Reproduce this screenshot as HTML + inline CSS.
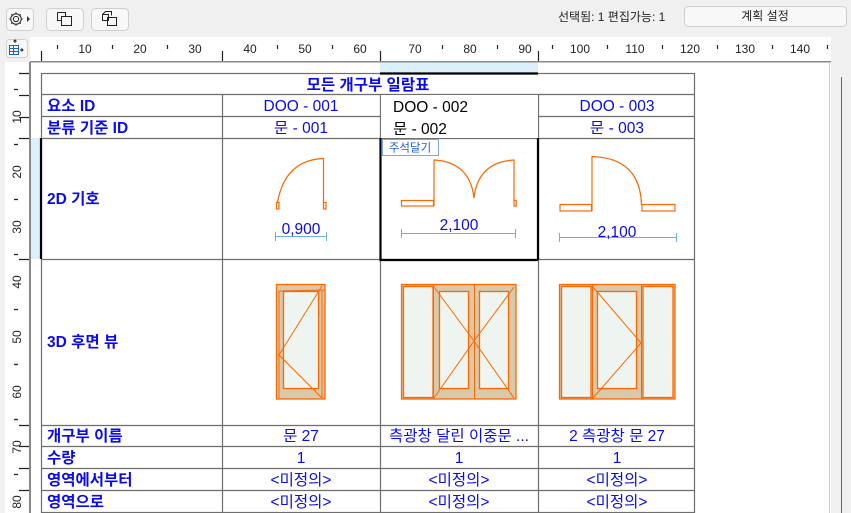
<!DOCTYPE html>
<html><head><meta charset="utf-8"><style>
html,body{margin:0;padding:0;width:851px;height:513px;overflow:hidden;background:#f0f0f0}
svg{display:block;font-family:"Liberation Sans","Noto Sans CJK KR",sans-serif}
</style></head><body>
<svg width="851" height="513" viewBox="0 0 851 513" xmlns="http://www.w3.org/2000/svg">
<!-- toolbar -->
<rect x="6.5" y="8.5" width="27" height="22" rx="4" fill="#f8f8f8" stroke="#cfcfcf"/>
<g fill="none" stroke="#333" stroke-width="1.1"><circle cx="16" cy="19" r="2.6"/><circle cx="16" cy="19" r="5.2"/>
<path d="M16 12.3v1.5M16 24.2v1.5M9.3 19h1.5M21.2 19h1.5M11.3 14.3l1 1M19.7 22.7l1 1M11.3 23.7l1-1M19.7 15.3l1-1"/></g>
<path d="M27 16 L30 19 L27 22Z" fill="#333"/>
<rect x="46.5" y="8.5" width="37" height="22" rx="4" fill="#f8f8f8" stroke="#cfcfcf"/>
<g fill="none" stroke="#222"><path d="M57.5 12.5h8v4M57.5 12.5v8h4"/><rect x="61.5" y="16.5" width="10" height="9"/></g>
<rect x="91.5" y="8.5" width="37" height="22" rx="4" fill="#f8f8f8" stroke="#cfcfcf"/>
<g fill="none" stroke="#222"><path d="M102.5 14.5l3-3h6v4M102.5 14.5h6v6h-6z"/><rect x="107.5" y="17.5" width="9" height="8"/></g>
<text x="558" y="21" font-size="12" fill="#222">선택됨: 1  편집가능: 1</text>
<rect x="684.5" y="6.5" width="162" height="20" rx="4" fill="#f8f8f8" stroke="#cfcfcf"/>
<text x="765" y="20" font-size="12" fill="#222" text-anchor="middle">계획 설정</text>
<!-- corner icon -->
<rect x="6.5" y="39.5" width="21" height="18" rx="3" fill="#f8f8f8" stroke="#cfcfcf"/>
<g stroke="#1f5fd0" fill="none"><rect x="9.5" y="45.5" width="9" height="9"/><path d="M9.5 48.5h9M9.5 51.5h9M13.5 45.5v9"/></g>
<path d="M15 43v-3M13.5 41.5L15 40l1.5 1.5M20 50h3M21.5 48.5L23 50l-1.5 1.5" stroke="#222" fill="none"/>
<!-- top ruler -->
<rect x="30" y="37" width="801" height="25" fill="#fff"/>
<line x1="30" y1="61.5" x2="831" y2="61.5" stroke="#888"/>
<g stroke="#222" stroke-width="1.2">
<path d="M41.5 51v10M222.5 51v10M380.5 51v10M538.5 51v10"/>
<path d="M57.5 45v4M112.5 45v4M167.5 45v4M277.5 45v4M332.5 45v4M442.5 45v4M497.5 45v4M552.5 45v4M607.5 45v4M662.5 45v4M717.5 45v4M772.5 45v4M827.5 45v4"/>
</g>
<g font-size="12" fill="#222" text-anchor="middle">
<text x="85" y="53">10</text><text x="140" y="53">20</text><text x="195" y="53">30</text><text x="250" y="53">40</text><text x="305" y="53">50</text><text x="360" y="53">60</text><text x="415" y="53">70</text><text x="470" y="53">80</text><text x="525" y="53">90</text><text x="580" y="53">100</text><text x="635" y="53">110</text><text x="690" y="53">120</text><text x="745" y="53">130</text><text x="800" y="53">140</text>
</g>
<!-- left ruler -->
<rect x="5" y="62" width="25" height="451" fill="#fff"/>
<rect x="30" y="138" width="11" height="121" fill="#dcf0fb"/>
<line x1="29.5" y1="62" x2="29.5" y2="513" stroke="#888"/>
<g stroke="#222" stroke-width="1.2">
<path d="M19 73.5h10M19 95.5h10M19 117.5h10M19 138.5h10M19 259.5h10M19 425.5h10M19 446.5h10M19 468.5h10M19 490.5h10"/>
<path d="M14 89.5h4M14 144.5h4M14 199.5h4M14 254.5h4M14 309.5h4M14 364.5h4M14 419.5h4M14 474.5h4"/>
</g>
<g font-size="12" fill="#222" text-anchor="middle">
<text transform="translate(21,117) rotate(-90)">10</text>
<text transform="translate(21,172) rotate(-90)">20</text>
<text transform="translate(21,227) rotate(-90)">30</text>
<text transform="translate(21,282) rotate(-90)">40</text>
<text transform="translate(21,337) rotate(-90)">50</text>
<text transform="translate(21,392) rotate(-90)">60</text>
<text transform="translate(21,447) rotate(-90)">70</text>
<text transform="translate(21,502) rotate(-90)">80</text>
</g>
<!-- canvas -->
<rect x="30" y="62" width="801" height="451" fill="#fff"/>
<rect x="380" y="62" width="158" height="11" fill="#dcf0fb"/>
<rect x="30" y="138" width="11" height="121" fill="#dcf0fb"/>
<line x1="30" y1="62" x2="831" y2="62" stroke="#888" stroke-width="1"/>
<line x1="30.5" y1="62" x2="30.5" y2="513" stroke="#888"/>
<line x1="829.5" y1="62" x2="829.5" y2="513" stroke="#ccc"/>
<line x1="841.5" y1="77" x2="841.5" y2="513" stroke="#666"/>
<!-- table grid -->
<g stroke="#6e6e6e" stroke-width="1.2" fill="none">
<rect x="41.5" y="73.5" width="653" height="439"/>
<path d="M41.5 94.5H695M41.5 116.5H695M41.5 138.5H695M41.5 259.5H695M41.5 425.5H695M41.5 446.5H695M41.5 468.5H695M41.5 490.5H695"/>
<path d="M222.5 94v419M380.5 94v419M538.5 94v419"/>
</g>
<rect x="381" y="95" width="157" height="43" fill="#fff"/>
<g stroke="#000" stroke-width="2.2" fill="none">
<path d="M380 73.5H538"/>
<path d="M41 138v121M380.5 138v122H538M538 138v122"/>
</g>
<!-- texts -->
<g font-size="15.5" fill="#0a0af0">
<text x="368" y="90" text-anchor="middle" font-weight="bold">모든 개구부 일람표</text>
<g font-weight="bold">
<text x="47" y="111">요소 ID</text>
<text x="47" y="133">분류 기준 ID</text>
<text x="47" y="204">2D 기호</text>
<text x="47" y="347">3D 후면 뷰</text>
<text x="47" y="441">개구부 이름</text>
<text x="47" y="463">수량</text>
<text x="47" y="485">영역에서부터</text>
<text x="47" y="507">영역으로</text>
</g>
<g text-anchor="middle">
<text x="301" y="111">DOO - 001</text><text x="617" y="111">DOO - 003</text>
<text x="301" y="133">문 - 001</text><text x="617" y="133">문 - 003</text>
<text x="301" y="441">문 27</text><text x="459" y="441">측광창 달린 이중문 ...</text><text x="617" y="441">2 측광창 문 27</text>
<text x="301" y="463">1</text><text x="459" y="463">1</text><text x="617" y="463">1</text>
<text x="301" y="485">&lt;미정의&gt;</text><text x="459" y="485">&lt;미정의&gt;</text><text x="617" y="485">&lt;미정의&gt;</text>
<text x="301" y="507">&lt;미정의&gt;</text><text x="459" y="507">&lt;미정의&gt;</text><text x="617" y="507">&lt;미정의&gt;</text>
</g>
</g>
<g font-size="15.5" fill="#000">
<text x="393" y="112">DOO - 002</text>
<text x="393" y="134">문 - 002</text>
</g>
<rect x="382.5" y="139.5" width="56" height="16" fill="#fff" stroke="#7aa8f0"/>
<text x="410" y="151.5" font-size="11.5" fill="#1f5fd0" text-anchor="middle">주석달기</text>
<!-- 2D symbols -->
<g fill="none" stroke="#ff6600" stroke-width="1.2">
<rect x="276.5" y="202.5" width="2.5" height="6.5"/>
<rect x="323.5" y="202.5" width="2.5" height="6.5"/>
<path d="M323.5 202.5V158.5Q285 160 277.5 202.5"/>
<rect x="401.5" y="200.5" width="32" height="5.5"/>
<rect x="514" y="200.5" width="2.2" height="5.5"/>
<path d="M434 206V160Q470 162 474 198Q478 162 514 160V200"/>
<rect x="560" y="204.5" width="31.5" height="6.5"/>
<rect x="642" y="204.5" width="33" height="6.5"/>
<path d="M592 211V156.5Q640 158 641.5 204.5"/>
</g>
<g stroke="#6aaef0" fill="none" stroke-width="1">
<path d="M275 236.5H327M275.5 232v9M326.5 232v9"/>
<path d="M401 233.5H516M401.5 229v9M515.5 229v9"/>
<path d="M559 237.5H677M559.5 233v9M676.5 233v9"/>
</g>
<g font-size="15.5" fill="#0a0af0" text-anchor="middle">
<text x="301" y="234">0,900</text>
<text x="459" y="230">2,100</text>
<text x="617" y="237">2,100</text>
</g>
<!-- 3D views -->
<g stroke="#ff6600" stroke-width="1.3">
<rect x="276.5" y="284.5" width="48.5" height="114.5" fill="#d9c9ab"/>
<rect x="283.5" y="291.5" width="35" height="97" fill="#eef5f0"/>
<path d="M279 291 L324 290 M279 291V398 M322 290V398" fill="none" stroke-width="1"/>
<path d="M322 286 L279 355 L322 398" fill="none" stroke-width="1"/>

<rect x="401.5" y="284.5" width="114.5" height="114.5" fill="#d9c9ab"/>
<rect x="403.5" y="286.5" width="29.5" height="111" fill="#eef5f0"/>
<rect x="439.5" y="291.5" width="29" height="97" fill="#eef5f0"/>
<rect x="479.5" y="291.5" width="29" height="97" fill="#eef5f0"/>
<path d="M474.5 285v114 M433.5 285v114" fill="none" stroke-width="1"/>
<path d="M434 287 L474 341 L434 398 M514 287 L474 341 L514 398" fill="none" stroke-width="1"/>

<rect x="559.5" y="284.5" width="115.5" height="114.5" fill="#d9c9ab"/>
<rect x="561.5" y="286.5" width="29.5" height="111" fill="#eef5f0"/>
<rect x="643" y="286.5" width="30" height="111" fill="#eef5f0"/>
<rect x="597.5" y="291.5" width="39" height="97" fill="#eef5f0"/>
<path d="M592.5 285v114 M641.5 285v114" fill="none" stroke-width="1"/>
<path d="M593 287 L641 343 L593 398" fill="none" stroke-width="1"/>
</g>
</svg>
</body></html>
